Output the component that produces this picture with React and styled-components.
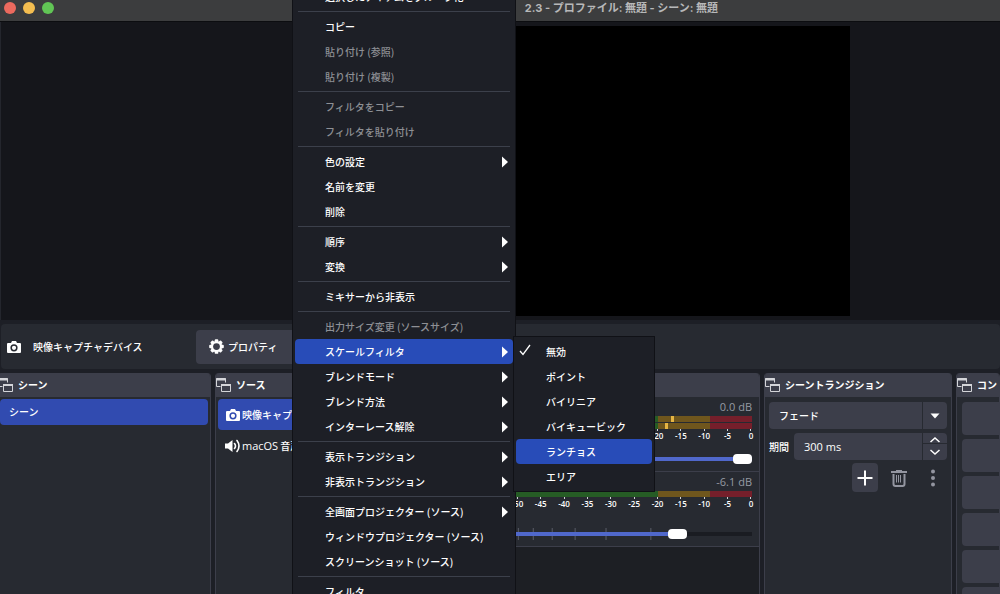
import React, { useState } from "react";
import styled, { createGlobalStyle } from "styled-components";

const GlobalStyle = createGlobalStyle`
  * {
    box-sizing: border-box;
  }
  body {
    margin: 0;
    background: #1d1f26;
    color: #fefefe;
    font-family: "Open Sans", "Noto Sans CJK JP", sans-serif;
    font-size: 10px;
    line-height: 16px;
    font-weight: 500;
    overflow: hidden;
  }
  button, input, select {
    font: inherit;
    color: inherit;
    margin: 0;
    padding: 0;
    border: 0;
    background: none;
  }
`;

const Window = styled.div`
  display: flex;
  flex-direction: column;
  height: 100vh;
  overflow: hidden;
`;

const TitleBar = styled.header`
  display: grid;
  grid-template-columns: 282px 1fr 282px;
  align-items: center;
  flex: none;
  height: 22px;
  padding: 0 0 6px 4px;
  background: #3c3d3e;
  border-bottom: 1px solid #0c0d10;
`;

const Lights = styled.div`
  display: flex;
  gap: 7px;
`;

const Light = styled.button`
  width: 12px;
  height: 12px;
  border-radius: 50%;
  background: ${p => p.$color};
`;

const Title = styled.h1`
  margin: 0;
  text-align: right;
  white-space: nowrap;
  font: 700 11px/16px Inter, "Noto Sans CJK JP", sans-serif;
  color: #b7b8b9;
`;

const Preview = styled.main`
  display: flex;
  justify-content: center;
  flex: none;
  padding: 4px 0 4px 182px;
  background: #15161b;
  border-left: 1px solid #24262d;
`;

const Canvas = styled.div`
  width: 517px;
  height: 290px;
  background: #000;
`;

const ContextBar = styled.section`
  display: flex;
  align-items: center;
  flex: none;
  height: 45px;
  margin: 4px 0 4px 1px;
  padding-left: 6px;
  border-radius: 4px;
  background: #272a31;

  svg {
    flex: none;
  }
`;

const SourceName = styled.span`
  width: 175px;
  padding-left: 12px;
`;

const PropertiesButton = styled.button`
  display: flex;
  align-items: center;
  gap: 4px;
  width: 112px;
  height: 34px;
  padding-left: 13px;
  border-radius: 4px;
  background: #3c3e4a;
`;

const Docks = styled.div`
  display: grid;
  grid-template-columns: 214px 250px minmax(0, 1fr) 188px 44px;
  gap: 4px;
  flex: 1;
  min-height: 0;
  margin-left: -3px;
`;

const DockBox = styled.section`
  display: flex;
  flex-direction: column;
  min-width: 0;
  overflow: hidden;
  border-radius: 4px 4px 0 0;
  background: ${p => (p.$empty ? "#1d1f24" : "#272a31")};
  border: solid #3c3e4a;
  border-width: 0 1px;
`;

const DockHeader = styled.h2`
  display: flex;
  align-items: center;
  gap: 5px;
  flex: none;
  height: 24px;
  margin: 0;
  background: #3c3e4a;
  font-size: 10px;
  font-weight: 700;
  white-space: nowrap;

  svg {
    flex: none;
  }
`;

const List = styled.ul`
  margin: 0;
  padding: 2px;
  list-style: none;
`;

const ListItem = styled.li`
  display: flex;
  align-items: center;
  gap: 2px;
  height: ${p => p.$height}px;
  padding-left: ${p => p.$indent}px;
  border-radius: 4px;
  background: ${p => (p.$selected ? "#314bb0" : "none")};
  white-space: nowrap;
`;

const Latin = styled.span`
  font-size: 11px;
`;

const Channel = styled.div`
  display: flex;
  flex-direction: column;
  height: 75px;
  padding: 2px 7px 6px 1px;
  background: #272a31;
  border-bottom: 1px solid #3c3e4a;
`;

const Level = styled.div`
  text-align: right;
  font-size: 11px;
  line-height: 16px;
  color: #969aa3;
`;

const Meter = styled.div`
  position: relative;
  flex: none;
  height: 6px;
  margin-top: 1px;
  background: linear-gradient(to right, #265c25 66.7%, #6f561d 66.7% 85%, #751f2b 85%);
`;

const Peak = styled.i`
  position: absolute;
  top: 0;
  width: 3px;
  height: 6px;
  background: #e6b544;
`;

const Scale = styled.div`
  display: flex;
  justify-content: space-between;
  margin: 0 -7px 0 15px;
  font-size: 8px;
  font-weight: 600;
  line-height: 10px;
`;

const Mark = styled.span`
  width: 16px;
  text-align: center;

  &::before {
    content: "";
    display: block;
    width: 1px;
    height: 2px;
    margin: 0 auto;
    background: #d0d2d6;
  }
`;

const Fader = styled.div`
  display: grid;
  align-items: center;
  height: 12px;
  margin-top: auto;

  > * {
    grid-area: 1 / 1;
    width: 100%;
  }
`;

const Slider = styled.input`
  appearance: none;
  height: 12px;
  background: linear-gradient(to right, #5068cb ${p => p.value}%, #1a1c22 ${p => p.value}%) center / 100% 4px no-repeat;

  &::-webkit-slider-thumb {
    appearance: none;
    width: 19px;
    height: 10px;
    border-radius: 4px;
    background: #fff;
  }
`;

const Form = styled.div`
  display: flex;
  flex-direction: column;
  gap: 4px;
  padding: 5px 4px;
`;

const Control = styled.div`
  display: grid;
  grid-template-columns: 1fr 25px;
  min-width: 0;
  height: 27px;
  border-radius: 4px;
  background: #3c3e4a;

  select, input {
    appearance: none;
    width: 100%;
    padding-left: 10px;
    outline: none;
  }
  input {
    font-size: 11px;
  }
  select {
    grid-area: 1 / 1 / 2 / 3;
  }
`;

const Field = styled.div`
  display: flex;
  align-items: center;
  gap: 5px;
  white-space: nowrap;

  ${Control} {
    flex: 1;
  }
`;

const Arrow = styled.span`
  grid-area: 1 / 2;
  display: grid;
  place-items: center;
  border-left: 1px solid #272a31;
  pointer-events: none;
`;

const Steps = styled.div`
  display: grid;
  grid-template-rows: 10px 1fr;
  border-left: 1px solid #272a31;

  button {
    display: grid;
    place-items: center;
  }
  button:first-child {
    padding-top: 4px;
  }
  button + button {
    border-top: 1px solid #272a31;
  }
`;

const Tools = styled.div`
  display: flex;
  justify-content: flex-end;
  gap: 8px;
  margin-top: -1px;
  padding-right: 1px;
`;

const ToolButton = styled.button`
  display: grid;
  place-items: center;
  width: 26px;
  height: 29px;
  border-radius: 4px;
  color: ${p => (p.$active ? "#fefefe" : "#9395a0")};
  background: ${p => (p.$active ? "#3c3e4a" : "none")};
`;

const ControlButtons = styled.div`
  display: flex;
  flex-direction: column;
  gap: 4px;
  padding: 5px 0 0 5px;
`;

const ControlButton = styled.button`
  flex: none;
  height: 33px;
  border-radius: 4px 0 0 4px;
  background: #3c3e4a;
`;

const Menu = styled.ul`
  position: absolute;
  top: ${p => p.$top}px;
  left: ${p => p.$left}px;
  width: ${p => p.$width}px;
  margin: 0;
  padding: 2px;
  list-style: none;
  background: #1d1f26;
  border: 1px solid #101116;
  font-family: "Noto Sans CJK JP", sans-serif;
`;

const MenuItem = styled.button`
  display: grid;
  grid-template-columns: 30px 1fr 8px;
  align-items: center;
  width: 100%;
  height: 25px;
  padding-right: 3px;
  border-radius: 4px;
  text-align: left;
  white-space: nowrap;
  background: ${p => (p.$active ? "#284cb8" : "none")};

  &:disabled {
    color: #8e9095;
  }
`;

const Separator = styled.li`
  height: 1px;
  margin: 2px 3px;
  background: #3c404b;
`;

const Camera = () => (
  <svg width="14" height="12" viewBox="0 0 14 12">
    <path fill="#fefefe" fillRule="evenodd" d="M1 2h3l1-2h4l1 2h3a1 1 0 0 1 1 1v8a1 1 0 0 1-1 1H1a1 1 0 0 1-1-1V3a1 1 0 0 1 1-1zm6 1.2a3.6 3.6 0 1 0 0 7.2 3.6 3.6 0 0 0 0-7.2zm0 1.5a2.1 2.1 0 1 1 0 4.2 2.1 2.1 0 0 1 0-4.2z" />
  </svg>
);

const Gear = () => (
  <svg width="15" height="15" viewBox="-8 -8 16 16" fill="#fefefe">
    <mask id="gear-hole" maskUnits="userSpaceOnUse" x="-8" y="-8" width="16" height="16">
      <rect x="-8" y="-8" width="16" height="16" fill="#fff" />
      <circle r="3.6" fill="#000" />
    </mask>
    <g mask="url(#gear-hole)">
      <circle r="6" />
      {[0, 45, 90, 135].map(angle => (
        <rect key={angle} x="-1.9" y="-7.8" width="3.8" height="15.6" rx="1" transform={`rotate(${angle})`} />
      ))}
    </g>
  </svg>
);

const Speaker = () => (
  <svg width="15" height="14" viewBox="0 0 15 14" fill="none" stroke="#fefefe" strokeWidth="1.6" strokeLinecap="round">
    <path fill="#fefefe" stroke="none" d="M0 4.5h3L7.5 1v12L3 9.5H0z" />
    <path d="M9.500 4.5q2 2.500 0 5M12 1.500q4 5.500 0 11" />
  </svg>
);

const Float = () => (
  <svg width="15" height="15" viewBox="0 0 15 15" fill="none" stroke="#d4d5d9">
    <path d="M4.5 8.5h-4v-8h9v4" />
    <path strokeWidth="2" d="M0 1.5h10M5 7h10" />
    <path d="M5.5 6.5h9v7h-9z" />
  </svg>
);

const Triangle = () => (
  <svg width="6" height="12" viewBox="0 0 6 12">
    <path fill="#fefefe" d="M0 0.5 6 6 0 11.5z" />
  </svg>
);

const Check = () => (
  <svg width="15" height="12" viewBox="-3 0 15 12" fill="none" stroke="#fefefe" strokeWidth="1.3">
    <path d="M1 7 4 10.5 11 1" />
  </svg>
);

const Chevron = ({ up }) => (
  <svg width="10" height="6" viewBox="0 0 10 6" fill="none" stroke="#fefefe" strokeWidth="1.5">
    <path d={up ? "M0.5 5 5 1l4.5 4" : "M0.5 1 5 5l4.5-4"} />
  </svg>
);

const contextItems = [
  { label: "選択したアイテムをグループ化" },
  null,
  { label: "コピー" },
  { label: "貼り付け (参照)", disabled: true },
  { label: "貼り付け (複製)", disabled: true },
  null,
  { label: "フィルタをコピー", disabled: true },
  { label: "フィルタを貼り付け", disabled: true },
  null,
  { label: "色の設定", sub: true },
  { label: "名前を変更" },
  { label: "削除" },
  null,
  { label: "順序", sub: true },
  { label: "変換", sub: true },
  null,
  { label: "ミキサーから非表示" },
  null,
  { label: "出力サイズ変更 (ソースサイズ)", disabled: true },
  { label: "スケールフィルタ", sub: true, active: true },
  { label: "ブレンドモード", sub: true },
  { label: "ブレンド方法", sub: true },
  { label: "インターレース解除", sub: true },
  null,
  { label: "表示トランジション", sub: true },
  { label: "非表示トランジション", sub: true },
  null,
  { label: "全画面プロジェクター (ソース)", sub: true },
  { label: "ウィンドウプロジェクター (ソース)" },
  { label: "スクリーンショット (ソース)" },
  null,
  { label: "フィルタ" },
];

const filterItems = [
  { label: "無効", checked: true },
  { label: "ポイント" },
  { label: "バイリニア" },
  { label: "バイキュービック" },
  { label: "ランチョス", active: true },
  { label: "エリア" },
];

const marks = [-55, -50, -45, -40, -35, -30, -25, -20, -15, -10, -5, 0];

const PopupMenu = ({ items, ...rest }) => (
  <Menu {...rest}>
    {items.map((item, i) =>
      item ? (
        <li key={i}>
          <MenuItem type="button" $active={item.active} disabled={item.disabled}>
            <span>{item.checked && <Check />}</span>
            <span>{item.label}</span>
            {item.sub && <Triangle />}
          </MenuItem>
        </li>
      ) : (
        <Separator key={i} />
      )
    )}
  </Menu>
);

const Dock = ({ title, empty, children }) => (
  <DockBox $empty={empty}>
    <DockHeader>
      <Float />
      {title}
    </DockHeader>
    {children}
  </DockBox>
);

const MixerChannel = ({ name, level, peaks, start, faderMarks }) => {
  const [volume, setVolume] = useState(start);
  return (
    <Channel>
      <Level>{level} dB</Level>
      {peaks.map((peak, i) => (
        <Meter key={i}>{peak && <Peak style={{ left: `${peak}%` }} />}</Meter>
      ))}
      <Scale>
        {marks.map(mark => (
          <Mark key={mark}>{mark}</Mark>
        ))}
      </Scale>
      <Fader>
        {faderMarks && (
          <svg height="12" viewBox="0 0 282 12" preserveAspectRatio="none" stroke="#5a5d68">
            <path d="M47.5 0v12M62.5 0v12M81.5 0v12M104.5 0v12M135.5 0v12M180.5 0v12" />
          </svg>
        )}
        <Slider type="range" aria-label={name} value={volume} onChange={e => setVolume(e.target.value)} />
      </Fader>
    </Channel>
  );
};

const App = () => (
  <>
    <GlobalStyle />
    <Window>
      <TitleBar>
        <Lights>
          <Light aria-label="Close" $color="#ec6a5e" />
          <Light aria-label="Minimize" $color="#f4be50" />
          <Light aria-label="Zoom" $color="#61c555" />
        </Lights>
        <Title>2.3 - プロファイル: 無題 - シーン: 無題</Title>
      </TitleBar>
      <Preview>
        <Canvas />
      </Preview>
      <ContextBar>
        <Camera />
        <SourceName>映像キャプチャデバイス</SourceName>
        <PropertiesButton type="button">
          <Gear />
          プロパティ
        </PropertiesButton>
      </ContextBar>
      <Docks>
        <Dock title="シーン">
          <List>
            <ListItem $height={26} $indent={9} $selected>
              シーン
            </ListItem>
          </List>
        </Dock>
        <Dock title="ソース">
          <List>
            <ListItem $height={31} $indent={8} $selected>
              <Camera />
              映像キャプチャデバイス
            </ListItem>
            <ListItem $height={31} $indent={7}>
              <Speaker />
              <Latin>macOS</Latin> 音声キャプチャ
            </ListItem>
          </List>
        </Dock>
        <Dock title="音声ミキサー" empty>
          <MixerChannel name="macOS 音声キャプチャ" level="0.0" peaks={[71, 69]} start={100} />
          <MixerChannel name="マイク" level="-6.1" peaks={[null]} start={75} faderMarks />
        </Dock>
        <Dock title="シーントランジション">
          <Form>
            <Control>
              <select aria-label="シーントランジション">
                <option>フェード</option>
              </select>
              <Arrow>
                <svg width="10" height="6" viewBox="0 0 10 6">
                  <path fill="#fefefe" d="M0.5 0.5h9L5 5.5z" />
                </svg>
              </Arrow>
            </Control>
            <Field>
              <label htmlFor="duration">期間</label>
              <Control>
                <input id="duration" defaultValue="300 ms" />
                <Steps>
                  <button type="button" aria-label="Increase">
                    <Chevron up />
                  </button>
                  <button type="button" aria-label="Decrease">
                    <Chevron />
                  </button>
                </Steps>
              </Control>
            </Field>
            <Tools>
              <ToolButton type="button" aria-label="Add" $active>
                <svg width="16" height="16" viewBox="0 0 16 16" stroke="currentColor" strokeWidth="2">
                  <path d="M8 0.5v15M0.5 8h15" />
                </svg>
              </ToolButton>
              <ToolButton type="button" aria-label="Remove">
                <svg width="16" height="18" viewBox="0 0 16 18" fill="none" stroke="currentColor">
                  <path strokeWidth="2" d="M0 3h16M2.500 5v10q0 2 2 2h7q2 0 2-2V5" />
                  <path d="M5 1.500h6M5.500 6v7.500M7.500 6v7.500M9.500 6v7.500" />
                </svg>
              </ToolButton>
              <ToolButton type="button" aria-label="More">
                <svg width="4" height="18" viewBox="0 0 4 18" fill="currentColor">
                  <circle cx="2" cy="2.5" r="2" />
                  <circle cx="2" cy="9" r="2" />
                  <circle cx="2" cy="15.5" r="2" />
                </svg>
              </ToolButton>
            </Tools>
          </Form>
        </Dock>
        <Dock title="コントロール">
          <ControlButtons>
            {["配信開始", "録画開始", "仮想カメラ開始", "スタジオモード", "設定", "終了"].map(label => (
              <ControlButton key={label} type="button" aria-label={label} />
            ))}
          </ControlButtons>
        </Dock>
      </Docks>
    </Window>
    <PopupMenu items={contextItems} $top={-19} $left={292} $width={224} />
    <PopupMenu items={filterItems} $top={336} $left={513} $width={142} />
  </>
);

export default App;
